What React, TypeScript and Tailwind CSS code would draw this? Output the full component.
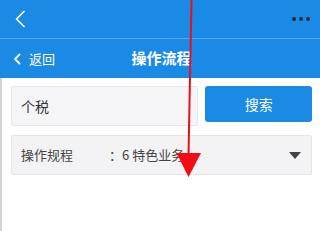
import React from "react";

export default function App() {
  return (
    <div
      className="relative w-[320px] h-[231px] overflow-hidden bg-white"
      style={{ fontFamily: '"Noto Sans CJK SC", "Noto Sans", sans-serif' }}
    >
      {/* top system bar */}
      <div className="h-[38px] bg-[#1a8ae5] flex items-center justify-between pl-[14px] pr-[10px]">
        <svg width="12" height="18" viewBox="0 0 12 18">
          <path d="M10 1.5 L2.5 9 L10 16.5" stroke="white" strokeWidth="1.7" fill="none" strokeLinecap="round" strokeLinejoin="round" />
        </svg>
        <div className="flex gap-[3px] items-center">
          <span className="w-[4px] h-[4px] rounded-full bg-[#1d2a3a]" />
          <span className="w-[4px] h-[4px] rounded-full bg-[#1d2a3a]" />
          <span className="w-[4px] h-[4px] rounded-full bg-[#1d2a3a]" />
        </div>
      </div>
      <div className="h-px bg-[#4fa6ec]" />
      {/* title bar */}
      <div className="relative h-[39px] bg-[#1a8ae5] flex items-center px-[13px]">
        <div className="flex items-center gap-[8px] text-white text-[13px]">
          <svg width="8" height="12" viewBox="0 0 8 12">
            <path d="M6.5 1.5 L2 6 L6.5 10.5" stroke="white" strokeWidth="1.8" fill="none" strokeLinecap="round" strokeLinejoin="round" />
          </svg>
          <span>返回</span>
        </div>
        <div className="absolute inset-0 flex items-center justify-center text-white text-[15px] font-bold pl-[3px]">
          操作流程
        </div>
      </div>
      {/* content */}
      <div className="border-l-2 border-[#d4d4d4] h-[153px] pl-[9px] pr-[8px] pt-[8px]">
        <div className="flex gap-[7px]">
          <div className="w-[188px] h-[40px] bg-[#f5f4f6] border border-[#e8e8ea] rounded-[2px] flex items-center pl-[9px] text-[14px] text-[#333]">
            个税
          </div>
          <div className="w-[107px] h-[36px] bg-[#1a8ae5] rounded-[3px] flex items-center justify-center text-white text-[14px]">
            搜索
          </div>
        </div>
        <div className="mt-[9px] w-[301px] h-[40px] bg-[#f3f2f4] border border-[#e6e6e8] rounded-[2px] flex items-center pl-[9px] pr-[10px] text-[13px] text-[#444]">
          <span className="w-[80px]">操作规程</span>
          <span className="ml-[8px]">：6 特色业务</span>
          <svg className="ml-auto" width="12" height="7" viewBox="0 0 12 7">
            <path d="M0 0 L12 0 L6 7 Z" fill="#444" />
          </svg>
        </div>
      </div>
      {/* red arrow overlay */}
      <svg className="absolute left-0 top-0" width="320" height="231" viewBox="0 0 320 231">
        <line x1="191.5" y1="0" x2="188.5" y2="156" stroke="#e8101a" strokeWidth="2" />
        <polygon points="176.5,153 201,153 188.5,177" fill="#f20c14" />
      </svg>
    </div>
  );
}
